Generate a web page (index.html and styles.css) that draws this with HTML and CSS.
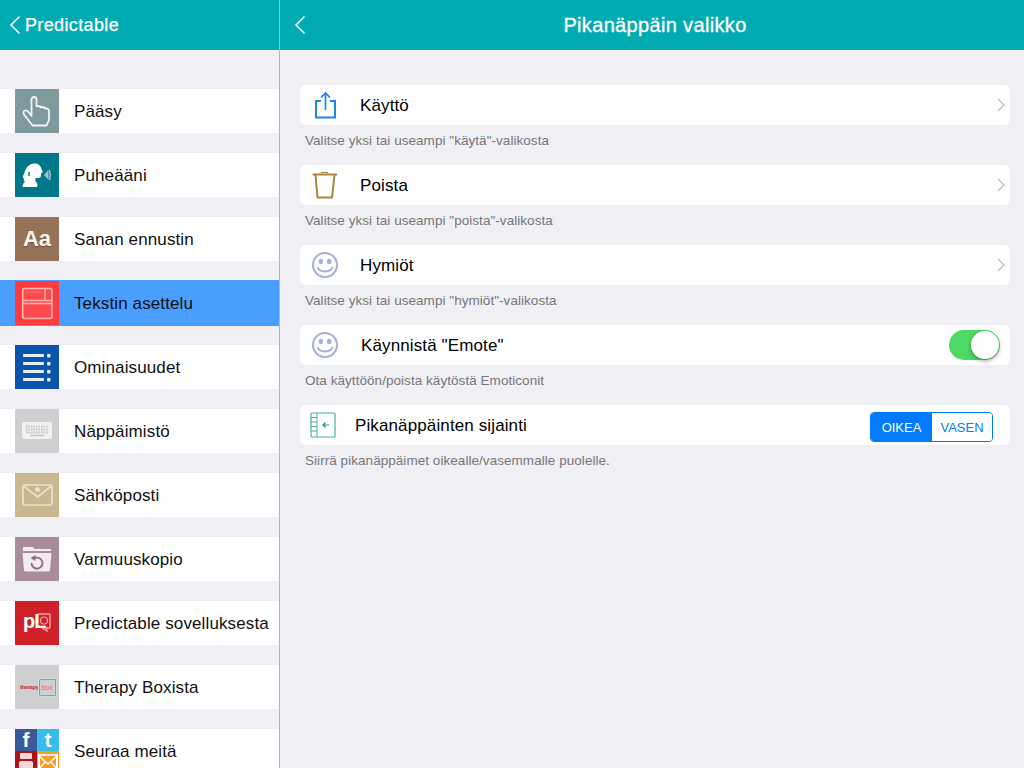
FILE: index.html
```html
<!DOCTYPE html>
<html lang="fi">
<head>
<meta charset="utf-8">
<title>Pikanäppäin valikko</title>
<link rel="stylesheet" href="styles.css">
</head>
<body>
<div class="app">
  <aside class="sidebar">
    <header class="bar bar-left">
      <svg class="back" width="12" height="20" viewBox="0 0 12 20"><path d="M10.500 1.500 2 10l8.500 8.500" fill="none" stroke="#fff" stroke-width="1.500"/></svg>
      <span class="back-label">Predictable</span>
    </header>
    <nav class="menu">
      <div class="item"><span class="tile t-access"><svg width="44" height="44" viewBox="0 0 44 44"><path d="M16.500 27V10.500a2.500 2.500 0 0 1 5 0V17l4 .5 .5 1 .5-.5 3 .5 .5 1 .5-.3 2.500 1c.7.300 1 .8 1 1.500V31l-2.500 5.500H17.500L9 25.500c-1-1.500-.5-3.500 1-4 1.500-.5 2.500.5 3.500 1.500z" fill="none" stroke="#f2f6f6" stroke-width="1.800" stroke-linejoin="round"/></svg></span><span class="label">Pääsy</span></div>
      <div class="item"><span class="tile t-voice"><svg width="44" height="44" viewBox="0 0 44 44"><path d="M7.500 34c0-2.500.5-3.500 2.500-5-1-1-1.500-2.500-1-3.500-1.500-.5-1.500-2-.5-3.500 1-1.500 1-3.500 2-5C12 13 16 10 20.500 10.500c3 .3 5.500 2.500 6 5.500l1.500 3-2 1.500c.5 2.500-.5 4.500-2.500 4.500h-3c-.5 2.500 0 4 1.500 5 .5 1 .5 2.500 0 4z" fill="#fff"/><path d="M14 19v4" stroke="#00788a" stroke-width="1.500" fill="none"/><path d="M29 22l4.500-5v10z" fill="#9cc5cc"/><path d="M34.500 17c1 3 1 7 0 10" stroke="#9cc5cc" stroke-width="1.500" fill="none"/></svg></span><span class="label">Puheääni</span></div>
      <div class="item"><span class="tile t-font"><span class="aa">Aa</span></span><span class="label">Sanan ennustin</span></div>
      <div class="item selected"><span class="tile t-layout"><svg width="44" height="44" viewBox="0 0 44 44"><rect x="7.700" y="7.500" width="29.300" height="30" rx="2" fill="#ff4a4d" stroke="#ffb4b4" stroke-width="1.600"/><path d="M8 19.500h29M8 22.500h29M30 8v11.500" fill="none" stroke="#ffb4b4" stroke-width="1.500"/><path d="M11 11h16" stroke="#ff7d7f" stroke-width="1"/></svg></span><span class="label">Tekstin asettelu</span></div>
      <div class="item"><span class="tile t-list"><svg width="44" height="44" viewBox="0 0 44 44"><g fill="#e8eefc"><rect x="8" y="9" width="21" height="3" rx="1"/><rect x="8" y="17" width="21" height="3" rx="1"/><rect x="8" y="25" width="21" height="3" rx="1"/><rect x="8" y="33" width="21" height="3" rx="1"/><rect x="32" y="9" width="3.500" height="3.500" rx="1"/><rect x="32" y="17" width="3.500" height="3.500" rx="1"/><rect x="32" y="25" width="3.500" height="3.500" rx="1"/><rect x="32" y="33" width="3.500" height="3.500" rx="1"/></g></svg></span><span class="label">Ominaisuudet</span></div>
      <div class="item"><span class="tile t-keys"><svg width="44" height="44" viewBox="0 0 44 44"><rect x="7" y="13" width="30" height="17" rx="2" fill="#f1f1f1"/><path d="M11 17.500h22M11 20.500h22M11 23.500h22" stroke="#c4c4c4" stroke-width="1.800" stroke-dasharray="1.500 1"/><path d="M15 26.500h14" stroke="#c4c4c4" stroke-width="1.500"/></svg></span><span class="label">Näppäimistö</span></div>
      <div class="item"><span class="tile t-mail"><svg width="44" height="44" viewBox="0 0 44 44"><rect x="8" y="12" width="29" height="20" rx="1.500" fill="none" stroke="#e9e1cc" stroke-width="1.700"/><path d="M8.500 13 22.500 24l14-11" fill="none" stroke="#e9e1cc" stroke-width="1.700"/><circle cx="22.500" cy="16.500" r="2.500" fill="#e9e1cc"/></svg></span><span class="label">Sähköposti</span></div>
      <div class="item"><span class="tile t-backup"><svg width="44" height="44" viewBox="0 0 44 44"><path d="M8 11c0-.6.4-1 1-1h9l1.500 2H35c.6 0 1 .4 1 1v1H8z" fill="#f2ebef"/><path d="M7.500 16h29l-1.500 17c0 .8-.7 1.500-1.500 1.500h-23c-.8 0-1.500-.7-1.500-1.500z" fill="#f2ebef"/><path d="M19 21.500a5.500 5.500 0 1 1-2.500 4.500" fill="none" stroke="#8a6d7e" stroke-width="1.800"/><path d="M20.500 18v6l-5-3z" fill="#8a6d7e"/></svg></span><span class="label">Varmuuskopio</span></div>
      <div class="item"><span class="tile t-pl"><span class="pl">pL</span><svg class="pl-bubble" width="15" height="20" viewBox="0 0 15 20"><path d="M1 1h11c.6 0 1 .4 1 1v12c0 .6-.4 1-1 1H9l1 3-5-3" fill="none" stroke="#f2a9ac" stroke-width="1.400"/><circle cx="7" cy="7.500" r="3.500" fill="none" stroke="#f2a9ac" stroke-width="1.200"/></svg></span><span class="label">Predictable sovelluksesta</span></div>
      <div class="item"><span class="tile t-box"><span class="tb-word">therapy</span><span class="tb-box">box</span></span><span class="label">Therapy Boxista</span></div>
      <div class="item"><span class="tile t-social"><span class="s s-fb">f</span><span class="s s-tw">t</span><span class="s s-yt"><svg width="22" height="22" viewBox="0 0 22 22"><rect x="5" y="2" width="12" height="6" rx="1" fill="#f3d8d8"/><rect x="4" y="10" width="14" height="10" rx="2" fill="#f3d8d8"/></svg></span><span class="s s-ml"><svg width="22" height="22" viewBox="0 0 22 22"><rect x="2" y="4" width="18" height="15" fill="none" stroke="#fff" stroke-width="2"/><path d="M2 5l9 8 9-8M2 18l6-7M20 18l-6-7" fill="none" stroke="#fff" stroke-width="1.500"/></svg></span></span><span class="label">Seuraa meitä</span></div>
    </nav>
  </aside>
  <main class="detail">
    <header class="bar bar-right">
      <svg class="back back-right" width="12" height="20" viewBox="0 0 12 20"><path d="M10.500 1.500 2 10l8.500 8.500" fill="none" stroke="#fff" stroke-width="1.500"/></svg>
      <h1 class="title">Pikanäppäin valikko</h1>
    </header>
    <section class="settings">
      <div class="group">
        <div class="row"><span class="ico"><svg width="26" height="28" viewBox="0 0 26 28"><path d="M9 10H4v16.500h19V10h-5" fill="none" stroke="#1c86f2" stroke-width="2"/><path d="M13.500 19V2.500M9 6.500l4.500-4.500L18 6.500" fill="none" stroke="#1c86f2" stroke-width="1.700"/></svg></span><span class="row-label">Käyttö</span><svg class="chev" width="10" height="14" viewBox="0 0 10 14"><path d="M2 1l6 6-6 6" fill="none" stroke="#c2c2c7" stroke-width="1.500"/></svg></div>
        <p class="hint">Valitse yksi tai useampi "käytä"-valikosta</p>
      </div>
      <div class="group">
        <div class="row"><span class="ico"><svg width="26" height="28" viewBox="0 0 26 28"><path d="M.5 3.500h24.500" stroke="#a9853f" stroke-width="2"/><path d="M9.500 2.500v-1h6v1" stroke="#a9853f" stroke-width="1.200" fill="none"/><path d="M3.500 4l2 22.500h14.500L22.500 4" fill="none" stroke="#a9853f" stroke-width="2"/></svg></span><span class="row-label">Poista</span><svg class="chev" width="10" height="14" viewBox="0 0 10 14"><path d="M2 1l6 6-6 6" fill="none" stroke="#c2c2c7" stroke-width="1.500"/></svg></div>
        <p class="hint">Valitse yksi tai useampi "poista"-valikosta</p>
      </div>
      <div class="group">
        <div class="row"><span class="ico"><svg width="28" height="28" viewBox="0 0 28 28"><circle cx="13" cy="14" r="12" fill="none" stroke="#a8aedd" stroke-width="2"/><ellipse cx="8.800" cy="10.500" rx="2.200" ry="2.800" fill="#a8aedd"/><ellipse cx="17.200" cy="10.500" rx="2.200" ry="2.800" fill="#a8aedd"/><path d="M5.500 16c2 6 13 6 15 0" fill="none" stroke="#a8aedd" stroke-width="2"/></svg></span><span class="row-label">Hymiöt</span><svg class="chev" width="10" height="14" viewBox="0 0 10 14"><path d="M2 1l6 6-6 6" fill="none" stroke="#c2c2c7" stroke-width="1.500"/></svg></div>
        <p class="hint">Valitse yksi tai useampi "hymiöt"-valikosta</p>
      </div>
      <div class="group">
        <div class="row"><span class="ico"><svg width="28" height="28" viewBox="0 0 28 28"><circle cx="13" cy="14" r="12" fill="none" stroke="#a8aedd" stroke-width="2"/><ellipse cx="8.800" cy="10.500" rx="2.200" ry="2.800" fill="#a8aedd"/><ellipse cx="17.200" cy="10.500" rx="2.200" ry="2.800" fill="#a8aedd"/><path d="M5.500 16c2 6 13 6 15 0" fill="none" stroke="#a8aedd" stroke-width="2"/></svg></span><span class="row-label label-emote">Käynnistä "Emote"</span><span class="switch"><span class="knob"></span></span></div>
        <p class="hint">Ota käyttöön/poista käytöstä Emoticonit</p>
      </div>
      <div class="group">
        <div class="row"><span class="ico ico-place"><svg width="26" height="26" viewBox="0 0 26 26"><rect x="1" y="1" width="24" height="24" rx="1" fill="none" stroke="#4fae9e" stroke-width="1.200"/><path d="M7 1v24M1 5.500h6M1 10h6M1 14.500h6M1 19h6" fill="none" stroke="#4fae9e" stroke-width="1"/><path d="M19 13h-6M15.500 10.500 13 13l2.500 2.500" fill="none" stroke="#159a86" stroke-width="1.200"/></svg></span><span class="row-label label-place">Pikanäppäinten sijainti</span><span class="segment"><span class="seg seg-on">OIKEA</span><span class="seg seg-off">VASEN</span></span></div>
        <p class="hint">Siirrä pikanäppäimet oikealle/vasemmalle puolelle.</p>
      </div>
    </section>
  </main>
</div>
</body>
</html>
```

FILE: styles.css
```css
html, body {
  margin: 0;
  padding: 0;
  height: 100%;
  overflow: hidden;
}
body {
  font-family: "Liberation Sans", Arial, sans-serif;
  background: #efeff4;
  color: #000;
}
.app {
  display: flex;
  width: 1024px;
  height: 768px;
  overflow: hidden;
}
.sidebar {
  flex: 0 0 279px;
  border-right: 1px solid #b4b4b8;
  overflow: hidden;
}
.detail {
  flex: 1;
  min-width: 0;
}
.bar {
  height: 50px;
  background: #00abb1;
  display: flex;
  align-items: center;
  color: #fff;
}
.bar-left {
  padding-left: 9px;
  gap: 4px;
}
.bar-right {
  position: relative;
  justify-content: center;
  padding-left: 6px;
}
.back {
  flex: none;
}
.back-right {
  position: absolute;
  left: 14px;
  top: 15px;
}
.back-label {
  font-size: 18px;
  letter-spacing: 0.36px;
  -webkit-text-stroke: 0.25px #fff;
}
.title {
  margin: 0;
  font-size: 20px;
  font-weight: 400;
  letter-spacing: 0.34px;
  -webkit-text-stroke: 0.35px #fff;
}
.menu {
  display: flex;
  flex-direction: column;
  gap: 20px;
  padding-top: 39px;
}
.item {
  flex: none;
  height: 44px;
  background: #fff;
  display: flex;
  align-items: center;
  padding-left: 15px;
  font-size: 17px;
  color: #111;
}
.item.selected {
  background: #4a9eff;
  height: 46px;
  margin: -1px 0 -1px;
}
.label {
  margin-left: 15px;
  padding-top: 2px;
  letter-spacing: 0.12px;
  white-space: nowrap;
}
.tile {
  position: relative;
  flex: none;
  width: 44px;
  height: 44px;
  display: block;
  overflow: hidden;
}
.tile svg {
  display: block;
}
.t-access { background: #7f9a9d; }
.t-voice { background: #00788a; }
.t-font {
  background: #967259;
  display: flex;
  align-items: center;
  justify-content: center;
}
.aa {
  color: #fbf5ee;
  font-size: 22px;
  font-weight: 700;
  text-shadow: 0 1px 1px rgba(60, 30, 10, 0.5);
}
.t-layout { background: #ff3b3f; }
.t-list { background: #0a54ae; }
.t-keys { background: #cfcfcf; }
.t-mail { background: #c8b890; }
.t-backup { background: #a98c9b; }
.t-pl {
  background: #cf2027;
}
.pl {
  position: absolute;
  left: 8px;
  top: 9px;
  color: #fff;
  font-size: 20px;
  font-weight: 700;
  letter-spacing: -1px;
}
.pl-bubble {
  position: absolute;
  left: 22px;
  top: 12px;
}
.t-box {
  background: #cfcfcf;
  display: flex;
  align-items: center;
  padding-left: 5px;
  box-sizing: border-box;
}
.tb-word {
  color: #c8303a;
  font-size: 6px;
  font-weight: 700;
  letter-spacing: -0.45px;
}
.tb-box {
  color: #e06a70;
  font-size: 7px;
  line-height: 15px;
  width: 15px;
  text-align: center;
  border: 1px solid #e07d82;
  box-shadow: 0 0 0 1px #c7dadd;
  border-radius: 1px;
}
.t-social {
  display: grid;
  grid-template-columns: 22px 22px;
  grid-template-rows: 22px 22px;
}
.s {
  display: block;
  color: #fff;
  font-weight: 700;
  font-size: 21px;
  line-height: 22px;
  text-align: center;
  overflow: hidden;
}
.s-fb { background: #3b5998; }
.s-tw { background: #36bde9; }
.s-yt { background: #a8141c; }
.s-ml { background: #fb9b24; }
.settings {
  display: flex;
  flex-direction: column;
  gap: 9px;
  padding: 35px 14px 0 20px;
}
.group {
  flex: none;
}
.row {
  height: 40px;
  background: #fff;
  border-radius: 5px;
  display: flex;
  align-items: center;
  font-size: 17px;
  color: #000;
}
.ico {
  flex: none;
  width: 60px;
  padding-left: 12px;
  box-sizing: border-box;
  display: flex;
  align-items: center;
}
.ico-place {
  width: 55px;
  padding-left: 10px;
}
.row-label {
  flex: 1;
  padding-top: 2px;
  letter-spacing: 0.12px;
  white-space: nowrap;
}
.label-emote {
  padding-left: 1px;
}
.chev {
  flex: none;
  margin-right: 4px;
}
.hint {
  margin: 8px 0 0 5px;
  height: 23px;
  font-size: 13.5px;
  letter-spacing: 0.05px;
  line-height: 15px;
  color: #77777c;
}
.switch {
  flex: none;
  position: relative;
  width: 51px;
  height: 30px;
  margin-right: 10px;
  border-radius: 15px;
  background: #4cd964;
}
.knob {
  position: absolute;
  right: 1px;
  top: 1px;
  width: 28px;
  height: 28px;
  border-radius: 50%;
  background: #fff;
  box-shadow: 0 2px 4px rgba(0, 0, 0, 0.35);
}
.segment {
  flex: none;
  display: flex;
  width: 123px;
  height: 30px;
  margin: 4px 17px 0 0;
  box-sizing: border-box;
  border: 1px solid #007aff;
  border-radius: 4px;
  overflow: hidden;
  font-size: 13px;
}
.seg {
  display: flex;
  align-items: center;
  justify-content: center;
}
.seg-on {
  width: 61px;
  background: #007aff;
  color: #fff;
}
.seg-off {
  flex: 1;
  color: #007aff;
  background: #fff;
}
```
